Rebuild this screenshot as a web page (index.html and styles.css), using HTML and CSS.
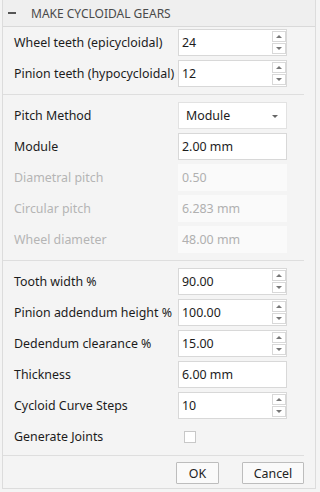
FILE: index.html
```html
<!DOCTYPE html>
<html>
<head>
<meta charset="utf-8">
<link rel="stylesheet" href="styles.css">
</head>
<body>
<div class="panel">
  <div class="header"><span class="minus"></span><span class="title">MAKE CYCLOIDAL GEARS</span></div>
  <div class="section first">
    <div class="row"><span class="label">Wheel teeth (epicycloidal)</span><div class="input spin"><span>24</span><div class="spinner"><i class="up"></i><i class="down"></i></div></div></div>
    <div class="row"><span class="label">Pinion teeth (hypocycloidal)</span><div class="input spin"><span>12</span><div class="spinner"><i class="up"></i><i class="down"></i></div></div></div>
  </div>
  <div class="section">
    <div class="row"><span class="label">Pitch Method</span><div class="input select"><span>Module</span><i class="caret"></i></div></div>
    <div class="row"><span class="label">Module</span><div class="input"><span>2.00 mm</span></div></div>
    <div class="row dis"><span class="label">Diametral pitch</span><div class="input"><span>0.50</span></div></div>
    <div class="row dis"><span class="label">Circular pitch</span><div class="input"><span>6.283 mm</span></div></div>
    <div class="row dis"><span class="label">Wheel diameter</span><div class="input"><span>48.00 mm</span></div></div>
  </div>
  <div class="section last">
    <div class="row"><span class="label">Tooth width %</span><div class="input spin"><span>90.00</span><div class="spinner"><i class="up"></i><i class="down"></i></div></div></div>
    <div class="row"><span class="label">Pinion addendum height %</span><div class="input spin"><span>100.00</span><div class="spinner"><i class="up"></i><i class="down"></i></div></div></div>
    <div class="row"><span class="label">Dedendum clearance %</span><div class="input spin"><span>15.00</span><div class="spinner"><i class="up"></i><i class="down"></i></div></div></div>
    <div class="row"><span class="label">Thickness</span><div class="input"><span>6.00 mm</span></div></div>
    <div class="row"><span class="label">Cycloid Curve Steps</span><div class="input spin"><span>10</span><div class="spinner"><i class="up"></i><i class="down"></i></div></div></div>
    <div class="row"><span class="label">Generate Joints</span><div class="checkcell"><span class="check"></span></div></div>
  </div>
  <div class="footer">
    <button class="btn ok">OK</button>
    <button class="btn cancel">Cancel</button>
  </div>
</div>
</body>
</html>
```
FILE: styles.css
```css
html, body {
  margin: 0;
  padding: 0;
  background: #f4f4f4;
  font-family: "Noto Sans", "Open Sans", sans-serif;
  font-size: 12.4px;
  color: #1c1c1c;
}
.panel {
  width: 314px;
  height: 489px;
  margin-left: 2px;
  border-left: 1px solid #dcdcdc;
  border-right: 1px solid #dcdcdc;
  border-bottom: 1px solid #dcdcdc;
  background: #f4f4f4;
  box-sizing: border-box;
  display: flex;
  flex-direction: column;
}
.header {
  height: 27px;
  flex: 0 0 27px;
  display: flex;
  align-items: center;
  background: #efefef;
  border-bottom: 1px solid #d9d9d9;
  box-sizing: border-box;
  color: #4a4a4a;
  font-size: 12px;
}
.minus {
  width: 8px;
  height: 1.5px;
  background: #555;
  margin-left: 5px;
  margin-right: 15px;
}
.section {
  border-bottom: 1px solid #dedede;
  margin-right: 11px;
  padding: 5px 0 5px 0;
}
.section.first { padding-top: 0; }
.section.last { padding-bottom: 3px; }
.row {
  height: 31px;
  display: flex;
  align-items: center;
  padding-left: 11px;
}
.label {
  width: 164px;
  white-space: nowrap;
}
.input {
  width: 109px;
  height: 27px;
  box-sizing: border-box;
  background: #fff;
  border: 1px solid #d8d8d8;
  display: flex;
  align-items: center;
  padding-left: 3px;
  position: relative;
}
.dis .label { color: #b5b5b5; }
.dis .input { border-color: #fafafa; background: #fafafa; color: #b0b0b0; }
.select { padding-left: 7px; border-color: #e2e2e2; }
.select .caret {
  position: absolute;
  right: 8px;
  top: 12px;
  border-left: 3px solid transparent;
  border-right: 3px solid transparent;
  border-top: 3px solid #666;
}
.spinner {
  position: absolute;
  right: 0;
  top: 0;
  bottom: 0;
  width: 14px;
  display: flex;
  flex-direction: column;
  justify-content: space-between;
  padding: 1px 0;
  box-sizing: border-box;
}
.spinner i {
  flex: 0 0 11px;
  border: 1px solid #d8d8d8;
  box-sizing: border-box;
  position: relative;
}
.spinner i::after {
  content: "";
  position: absolute;
  left: 3px;
  top: 3px;
  border-left: 3px solid transparent;
  border-right: 3px solid transparent;
}
.spinner .up::after { border-bottom: 3px solid #777; }
.spinner .down::after { border-top: 3px solid #777; }
.checkcell {
  width: 109px;
  display: flex;
  padding-left: 6px;
}
.check {
  width: 12px;
  height: 12px;
  border: 1px solid #c8c8c8;
  background: #fff;
  box-sizing: border-box;
}
.footer {
  display: flex;
  padding: 6px 0 0 173px;
  gap: 23px;
}
.btn {
  font-family: inherit;
  font-size: 12.4px;
  color: #222;
  height: 22px;
  background: #fafafa;
  border: 1px solid #bdbdbd;
  border-radius: 1px;
  padding: 0;
}
.ok { width: 43px; }
.cancel { width: 62px; }
```
